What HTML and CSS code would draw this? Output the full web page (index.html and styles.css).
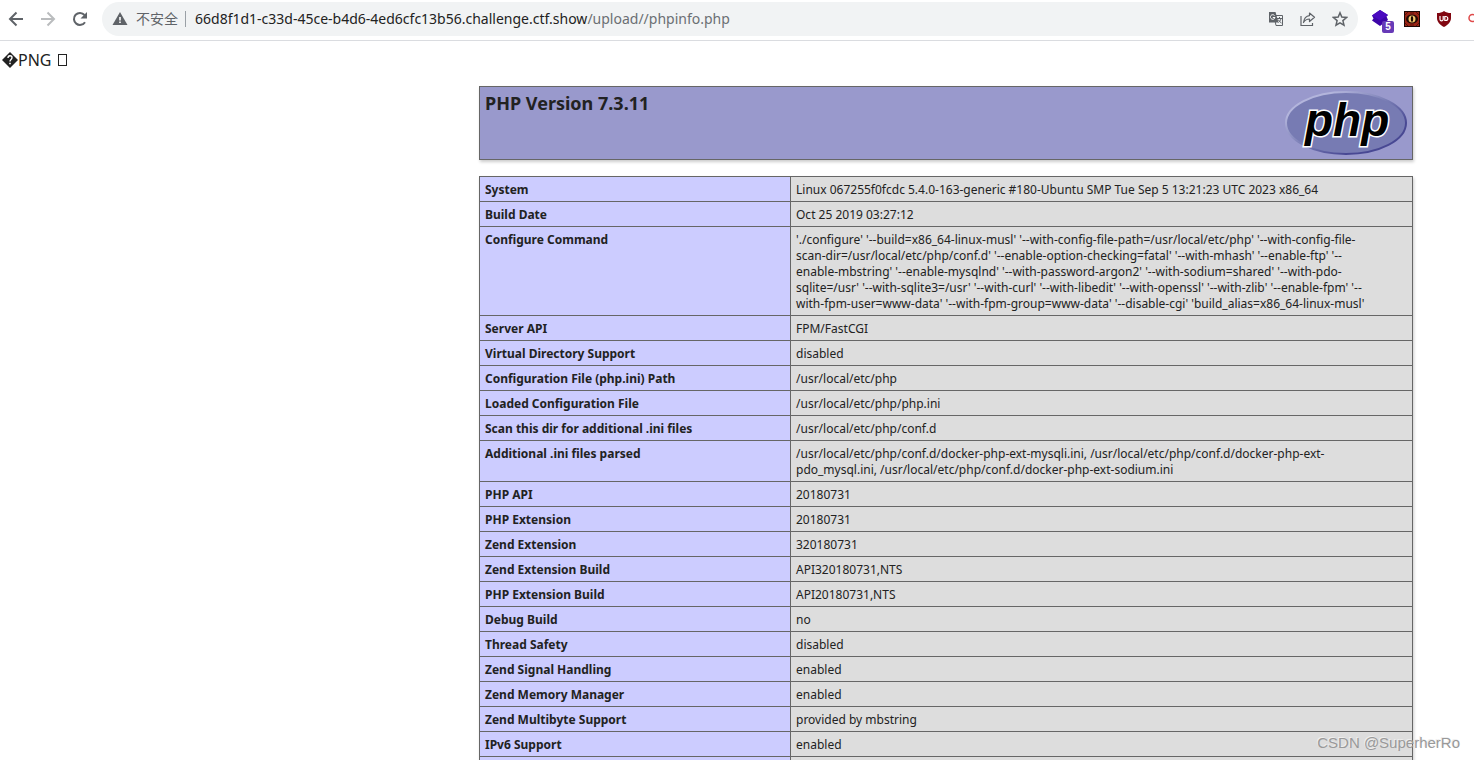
FILE: index.html
```html
<!DOCTYPE html>
<html lang="en">
<head>
<meta charset="utf-8">
<title>phpinfo()</title>
<link rel="stylesheet" href="styles.css">
</head>
<body>
<header class="toolbar">
  <nav class="nav">
    <button class="icon-btn" type="button" aria-label="Back"><svg width="16" height="16" viewBox="0 0 16 16" fill="none" stroke="#5f6368" stroke-width="2"><path d="M15 8H2M8.500 1.500L2 8l6.500 6.500"/></svg></button>
    <button class="icon-btn" type="button" aria-label="Forward"><svg width="16" height="16" viewBox="0 0 16 16" fill="none" stroke="#babcbe" stroke-width="2"><path d="M1 8h13M7.500 1.500L14 8l-6.500 6.500"/></svg></button>
    <button class="icon-btn" type="button" aria-label="Reload"><svg width="16" height="16" viewBox="0 0 16 16"><path d="M13 11.200A6 6 0 1 1 12.500 4" fill="none" stroke="#5f6368" stroke-width="2"/><path d="M15 1v6.500H8.500z" fill="#5f6368"/></svg></button>
  </nav>
  <div class="omnibox">
    <svg class="warn" width="16" height="14" viewBox="0 0 16 14"><path d="M8 0l7.500 13H.5z" fill="#5f6368"/><path d="M7.200 5h1.600v3.500H7.200zM7.200 9.500h1.600v1.600H7.200z" fill="#fff"/></svg>
    <span class="insecure">不安全</span>
    <span class="divider"></span>
    <span class="url">66d8f1d1-c33d-45ce-b4d6-4ed6cfc13b56.challenge.ctf.show<span class="path">/upload//phpinfo.php</span></span>
    <div class="actions">
      <button class="icon-btn" type="button" aria-label="Translate"><svg width="16" height="16" viewBox="0 0 16 16"><path d="M6 4.500h8.500v10H8z" fill="#f1f3f4" stroke="#5f6368"/><path d="M1 1h6.500l3 10.500H1z" fill="#5f6368"/><path d="M6.500 4.500A2.300 2.300 0 1 0 7 6.500H4.800" fill="none" stroke="#fff" stroke-width="1"/><path d="M9 7.500h5M11.500 6v1.500M13 7.500c-.5 2-1.500 3-2.500 4M10 8.500c1 1.500 2 2.500 3.500 3.500" fill="none" stroke="#5f6368"/></svg></button>
      <button class="icon-btn" type="button" aria-label="Share"><svg width="16" height="16" viewBox="0 0 16 16" fill="none" stroke="#5f6368" stroke-width="1.200"><path d="M1 5v9.500h11.500V12"/><path d="M9.500 2l5 4.300-5 4.200V8C7 8 5 9 3.500 11.500 4 7.500 6 5 9.500 4.600z" stroke-linejoin="round"/></svg></button>
      <button class="icon-btn" type="button" aria-label="Bookmark"><svg width="16" height="16" viewBox="0 0 16 16" fill="none" stroke="#5f6368" stroke-width="1.500"><path d="M8 1.800l1.800 4.300 4.700.4-3.600 3.100 1.100 4.600L8 11.800l-4 2.400 1.100-4.600L1.500 6.500l4.700-.4z"/></svg></button>
    </div>
  </div>
  <div class="extensions">
    <button class="icon-btn badged" type="button" aria-label="Layers extension"><svg width="18" height="17" viewBox="0 0 18 17"><path d="M9 0l8 5-1.500 1.500L17 10l-8 6-8-5.500 1.500-2L1 5.500z" fill="#3d05a8"/><path d="M9 0l8 5-8 5.500-8-5z" fill="#4a0ac0"/></svg><span class="badge">5</span></button>
    <button class="icon-btn" type="button" aria-label="Eye extension"><svg width="16" height="16" viewBox="0 0 16 16"><path fill="#1d0805" d="M0 0h16v16H0z"/><path fill="#9b2414" d="M1 1h14v14H1z"/><path d="M1 4l3-3M1 12l3 3M12 1l3 3M15 12l-3 3M6 2l4 0M6 14h4" stroke="#5b130a"/><ellipse cx="8" cy="8" rx="6" ry="4.500" fill="#210a05"/><circle cx="8" cy="8" r="3.500" fill="#f0c56a"/><ellipse cx="8" cy="8" rx="1.200" ry="3" fill="#160805"/></svg></button>
    <button class="icon-btn" type="button" aria-label="Blocker extension"><svg width="16" height="16" viewBox="0 0 16 16"><path d="M8 0c2 1.500 4 2 7 2v5c0 4-3 7-7 9-4-2-7-5-7-9V2c3 0 5-.5 7-2z" fill="#800610"/><path d="M4 5v3.200a1.600 1.600 0 0 0 3.200 0V5M8.800 5.500v4h1a2 2 0 0 0 0-4z" fill="none" stroke="#fff" stroke-width="1.200"/></svg></button>
    <button class="icon-btn" type="button" aria-label="Search extension"><svg width="16" height="16" viewBox="0 0 16 16" fill="none" stroke="#df4a4a" stroke-width="1.500"><circle cx="4.500" cy="7" r="3.500"/><path d="M7 10l4 4"/></svg></button>
  </div>
</header>
<p class="bytes"><svg class="replacement" width="16" height="16" viewBox="0 0 16 16" role="img" aria-label="Replacement character"><path d="M8 0l8 8-8 8-8-8z" fill="#222"/><path d="M6 6c0-3 4-3 4-.5C10 7.500 8 7.300 8 9.500" fill="none" stroke="#fff" stroke-width="1.400"/><path d="M7.200 10.800h1.600v1.500H7.200z" fill="#fff"/></svg><span>PNG</span><span class="missing"></span></p>
<main class="info">
  <section class="banner">
    <h1>PHP Version 7.3.11</h1>
    <svg class="logo" width="122" height="64" viewBox="0 0 122 64" role="img" aria-label="PHP logo">
      <defs><linearGradient id="rim" x1="0" y1="0" x2="1" y2="1"><stop offset=".2" stop-color="#b3b5dc"/><stop offset=".5" stop-color="#777bb3"/><stop offset=".75" stop-color="#484893"/></linearGradient></defs>
      <ellipse cx="61" cy="32" rx="60" ry="31" fill="#777bb3" stroke="url(#rim)" stroke-width="2"/>
      <text class="logo-text" x="20" y="45">php</text>
    </svg>
  </section>
  <table class="facts">
    <tbody>
      <tr><th scope="row">System</th><td>Linux 067255f0fcdc 5.4.0-163-generic #180-Ubuntu SMP Tue Sep 5 13:21:23 UTC 2023 x86_64</td></tr>
      <tr><th scope="row">Build Date</th><td>Oct 25 2019 03:27:12</td></tr>
      <tr><th scope="row">Configure Command</th><td>'./configure' '--build=x86_64-linux-musl' '--with-config-file-path=/usr/local/etc/php' '--with-config-file-<br>scan-dir=/usr/local/etc/php/conf.d' '--enable-option-checking=fatal' '--with-mhash' '--enable-ftp' '--<br>enable-mbstring' '--enable-mysqlnd' '--with-password-argon2' '--with-sodium=shared' '--with-pdo-<br>sqlite=/usr' '--with-sqlite3=/usr' '--with-curl' '--with-libedit' '--with-openssl' '--with-zlib' '--enable-fpm' '--<br>with-fpm-user=www-data' '--with-fpm-group=www-data' '--disable-cgi' 'build_alias=x86_64-linux-musl'</td></tr>
      <tr><th scope="row">Server API</th><td>FPM/FastCGI</td></tr>
      <tr><th scope="row">Virtual Directory Support</th><td>disabled</td></tr>
      <tr><th scope="row">Configuration File (php.ini) Path</th><td>/usr/local/etc/php</td></tr>
      <tr><th scope="row">Loaded Configuration File</th><td>/usr/local/etc/php/php.ini</td></tr>
      <tr><th scope="row">Scan this dir for additional .ini files</th><td>/usr/local/etc/php/conf.d</td></tr>
      <tr><th scope="row">Additional .ini files parsed</th><td>/usr/local/etc/php/conf.d/docker-php-ext-mysqli.ini, /usr/local/etc/php/conf.d/docker-php-ext-<br>pdo_mysql.ini, /usr/local/etc/php/conf.d/docker-php-ext-sodium.ini</td></tr>
      <tr><th scope="row">PHP API</th><td>20180731</td></tr>
      <tr><th scope="row">PHP Extension</th><td>20180731</td></tr>
      <tr><th scope="row">Zend Extension</th><td>320180731</td></tr>
      <tr><th scope="row">Zend Extension Build</th><td>API320180731,NTS</td></tr>
      <tr><th scope="row">PHP Extension Build</th><td>API20180731,NTS</td></tr>
      <tr><th scope="row">Debug Build</th><td>no</td></tr>
      <tr><th scope="row">Thread Safety</th><td>disabled</td></tr>
      <tr><th scope="row">Zend Signal Handling</th><td>enabled</td></tr>
      <tr><th scope="row">Zend Memory Manager</th><td>enabled</td></tr>
      <tr><th scope="row">Zend Multibyte Support</th><td>provided by mbstring</td></tr>
      <tr><th scope="row">IPv6 Support</th><td>enabled</td></tr>
      <tr><th scope="row"></th><td></td></tr>
    </tbody>
  </table>
</main>
<div class="watermark">CSDN @SuperherRo</div>
</body>
</html>
```
FILE: styles.css
```css
* { box-sizing: border-box; }

body {
  height: 100vh;
  margin: 0;
  overflow: hidden;
  background: #fff;
  color: #222;
  font-family: "Noto Sans", "Noto Sans CJK SC", sans-serif;
  font-size: 12px;
  line-height: 16px;
}

.toolbar {
  display: flex;
  align-items: center;
  height: 41px;
  padding: 0 0 3px 8px;
  border-bottom: 1px solid #dadce0;
  overflow: hidden;
}

.nav, .actions, .extensions {
  display: flex;
  flex: none;
  gap: 16px;
}

.nav { margin-right: 14px; }

.icon-btn {
  display: flex;
  flex: none;
  align-items: center;
  justify-content: center;
  width: 16px;
  height: 16px;
  padding: 0;
  border: 0;
  background: none;
}

.icon-btn svg { flex: none; }

.omnibox {
  display: flex;
  flex: 1;
  align-items: center;
  min-width: 0;
  height: 34px;
  padding: 0 10px;
  border-radius: 17px;
  background: #f1f3f4;
  font-size: 14px;
  line-height: 20px;
}

.warn { flex: none; margin-right: 8px; }
.insecure { flex: none; color: #5f6368; }

.divider {
  flex: none;
  width: 1px;
  height: 16px;
  margin: 0 9px 0 7px;
  background: #9aa0a6;
}

.url { flex: 1; min-width: 0; overflow: hidden; white-space: nowrap; }
.path { color: #6b6f73; }

.extensions { width: 102px; margin-left: 14px; }

.badged { position: relative; }

.badge {
  position: absolute;
  left: 10px;
  top: 10px;
  width: 12px;
  height: 12px;
  border-radius: 2px;
  background: #673ab7;
  color: #fff;
  font-size: 10px;
  font-weight: 700;
  line-height: 12px;
}

.bytes {
  display: flex;
  align-items: center;
  margin: 0;
  padding: 8px 2px;
  font-size: 16px;
  line-height: 22px;
}

.missing {
  width: 9px;
  height: 12px;
  margin-left: 6px;
  border: 1px solid #222;
}

.info {
  width: 934px;
  margin: 7px 61px 0 auto;
}

.banner {
  display: flex;
  justify-content: space-between;
  align-items: flex-start;
  height: 74px;
  margin-bottom: 16px;
  padding: 4px 5px;
  border: 1px solid #666;
  background: #99c;
  box-shadow: 1px 2px 3px #ccc;
}

h1 {
  margin: 0;
  font-size: 18px;
  line-height: 24px;
}

.logo-text {
  fill: #000;
  stroke: #fff;
  stroke-width: 3px;
  paint-order: stroke;
  font: italic 700 46px "Liberation Sans", sans-serif;
}

.facts {
  width: 100%;
  table-layout: fixed;
  border-collapse: collapse;
  box-shadow: 1px 2px 3px #ccc;
}

.facts th, .facts td {
  height: 25px;
  padding: 5px 5px 3px;
  border: 1px solid #666;
  text-align: left;
  vertical-align: baseline;
  white-space: nowrap;
}

.facts th { width: 311px; background: #ccf; }
.facts td { background: #ddd; }

.watermark {
  position: absolute;
  right: 14px;
  bottom: 8px;
  color: #999;
  font: 15px/18px "Liberation Sans", sans-serif;
  text-shadow: -1px -1px 0 #eee;
}
```
